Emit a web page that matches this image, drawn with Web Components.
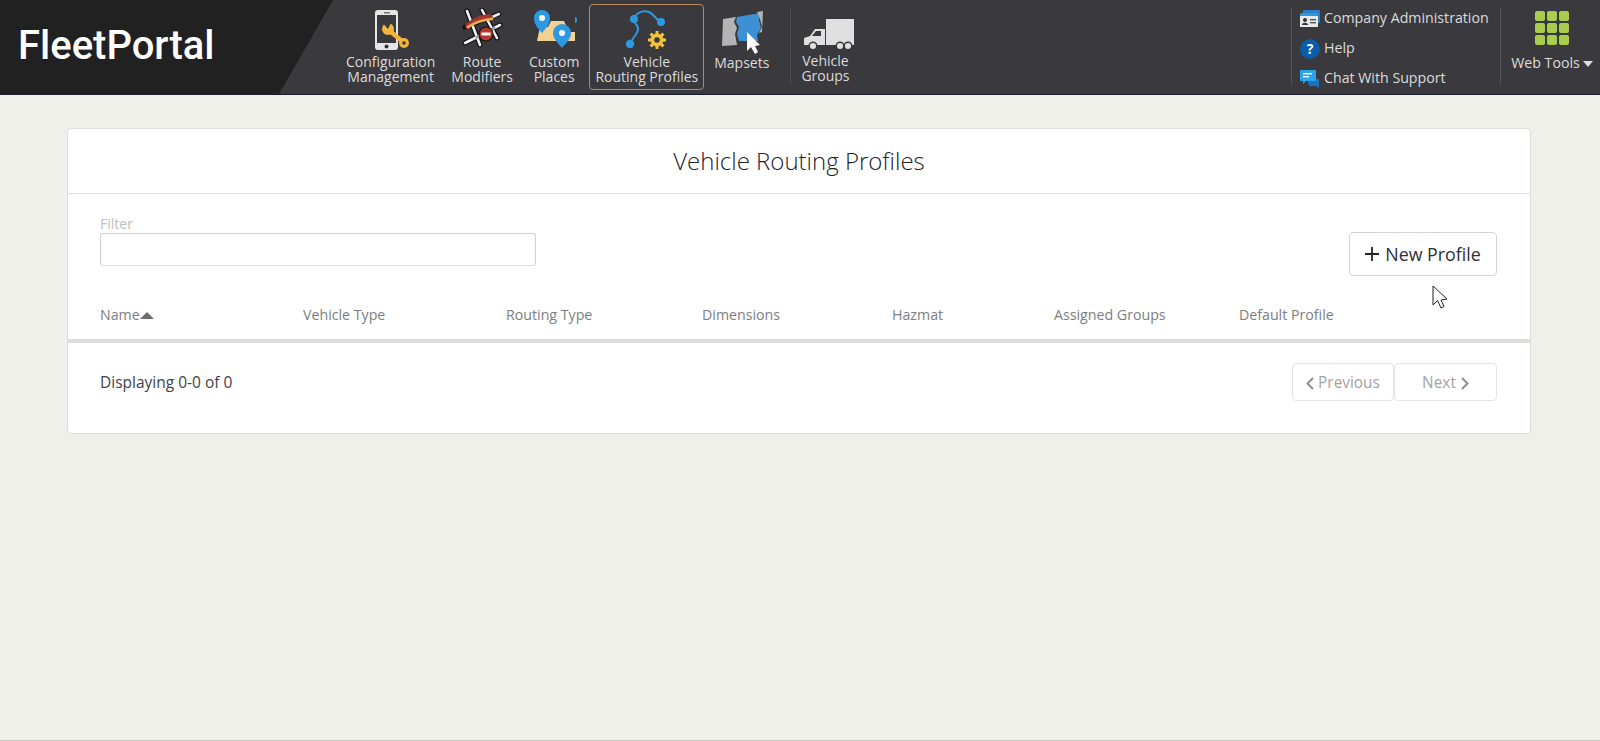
<!DOCTYPE html>
<html>
<head>
<meta charset="utf-8">
<title>FleetPortal</title>
<style>
    html,body{margin:0;padding:0;height:100%;}
    body{background:#f0f0ea;font-family:"Open Sans",sans-serif;overflow:hidden;box-sizing:border-box;border-bottom:1px solid #c6c6c0;}
</style>
</head>
<body>
<fp-header>
    <fp-nav-item slot="nav" label="Configuration<br>Management">
        <svg width="46" height="46" viewBox="0 0 46 46">
            <rect x="7" y="2" width="23" height="40" rx="3" fill="#e6e6e6"/>
            <rect x="9" y="7" width="19" height="28" fill="#39393e"/>
            <rect x="16" y="4" width="6" height="1.5" fill="#777"/>
            <circle cx="18.5" cy="38.5" r="2" fill="#333"/>
            <path d="M23 24 L34 33" fill="none" stroke="#f2b53c" stroke-width="4.5"/>
            <circle cx="20" cy="21" r="6" fill="#f2b53c"/>
            <path d="M13 13 L20 21 L24 13 Z" fill="#39393e"/>
            <circle cx="36" cy="35" r="5" fill="#f2b53c"/>
            <circle cx="36" cy="35" r="1.8" fill="#39393e"/>
        </svg>
    </fp-nav-item>
    <fp-nav-item slot="nav" label="Route<br>Modifiers">
        <svg width="46" height="46" viewBox="0 0 46 46">
            <g fill="none" stroke-linecap="round">
                <g stroke="#111" stroke-width="5">
                    <path d="M8 3 L21 37"/><path d="M23 2 L38 30"/><path d="M6 19 L40 6"/><path d="M6 35 L41 17"/>
                </g>
                <g stroke="#f2f2f2" stroke-width="2.6">
                    <path d="M8 3 L21 37"/><path d="M23 2 L38 30"/><path d="M31 10 L40 6"/><path d="M6 35 L18 29"/><path d="M35 20 L41 17"/>
                </g>
                <path d="M18 29 L35 20" stroke="#9a9a9a" stroke-width="3"/>
                <path d="M9 18 C15 12 24 9 31 9" stroke="#a8352a" stroke-width="5.5"/>
                <path d="M9 19 C15 15 24 12 33 11" stroke="#e8b050" stroke-width="2.4"/>
            </g>
            <circle cx="27" cy="26" r="7.5" fill="#111"/>
            <circle cx="27" cy="26" r="6.5" fill="#b5362a"/>
            <rect x="22.5" y="24.5" width="9" height="3" fill="#f4f4f4"/>
        </svg>
    </fp-nav-item>
    <fp-nav-item slot="nav" label="Custom<br>Places">
        <svg width="46" height="46" viewBox="0 0 46 46">
            <path d="M6 33 L9 19 L17 19 L20 13 L33 13 L38 24 L44 24 L44 33 Z" fill="#f3d193"/>
            <path d="M11 25 C6 19 3 16 3 10 a8 8 0 0 1 16 0 C19 16 16 19 11 25 Z" fill="#2b9ae2"/>
            <circle cx="11" cy="10" r="3" fill="#fff"/>
            <path d="M31 40 C25 33 22 30 22 25 a9 9 0 0 1 18 0 C40 30 37 33 31 40 Z" fill="#2b9ae2"/>
            <circle cx="31" cy="25" r="3" fill="#fff"/>
            <path d="M44 9 a2 3 0 0 1 0 6 Z" fill="#2b9ae2"/>
        </svg>
    </fp-nav-item>
    <fp-nav-item slot="nav" active label="Vehicle<br>Routing Profiles">
        <svg width="46" height="46" viewBox="0 0 46 46">
            <path d="M6 36 C8 30 13 27 14 22 C15 17 9 15 10 11 C12 4 20 2 25 4 C30 6 32 12 37 14" fill="none" stroke="#2b9ae2" stroke-width="2"/>
            <circle cx="10" cy="11" r="4" fill="#2b9ae2"/>
            <circle cx="37" cy="14" r="4" fill="#2b9ae2"/>
            <circle cx="6" cy="36" r="4.2" fill="#2b9ae2"/>
            <g fill="#f5c33b">
                <circle cx="33" cy="32" r="6.5"/>
                <g stroke="#f5c33b" stroke-width="3">
                    <path d="M33 23 V41"/><path d="M24 32 H42"/><path d="M26.6 25.6 L39.4 38.4"/><path d="M39.4 25.6 L26.6 38.4"/>
                </g>
            </g>
            <circle cx="33" cy="32" r="2.8" fill="#39393e"/>
        </svg>
    </fp-nav-item>
    <fp-nav-item slot="nav" single label="Mapsets">
        <svg width="46" height="46" viewBox="0 0 46 46">
            <path d="M4 11 L17 9 L15 14 L18 20 L16 26 L18 37 L3 38 Z" fill="#b4b4b4"/>
            <path d="M18 9 L41 5 L40 12 L42 20 L38 27 L39 33 L20 33 L18 26 L20 19 L17 14 Z" fill="#3d90d3"/>
            <path d="M38 4 L44 3 L43 24 L40 25 L43 19 L41 11 Z" fill="#b4b4b4"/>
            <path d="M28 24 L28 43 L32 39 L36 46 L39 44 L36 38 L41 37 Z" fill="#fff"/>
        </svg>
    </fp-nav-item>
    <fp-nav-item slot="nav" label="Vehicle<br>Groups" divided>
        <svg width="46" height="46" viewBox="0 0 46 46" style="overflow:visible">
            <g transform="translate(0 1)">
                <rect x="24" y="11" width="28" height="26" fill="#e0e0e0"/>
                <path d="M2 36 L2 30 L8 28 L13 21 L23 21 L23 37 L2 37 Z" fill="#e0e0e0"/>
                <path d="M10 28 L14 23 L19 23 L19 28 Z" fill="#39393e"/>
                <g fill="#e0e0e0" stroke="#39393e" stroke-width="1.5">
                    <circle cx="11" cy="38" r="3.8"/><circle cx="38" cy="38" r="3.8"/><circle cx="46" cy="38" r="3.8"/>
                </g>
            </g>
        </svg>
    </fp-nav-item>

    <fp-side-link slot="links" label="Company Administration">
        <svg width="20" height="18" viewBox="0 0 20 18">
            <rect x="3" y="0" width="17" height="13" rx="1" fill="#2b7fc4"/>
            <rect x="0" y="3" width="18" height="14" rx="1" fill="#2b9ae2"/>
            <rect x="0" y="6" width="18" height="11" fill="#e8e8e8"/>
            <circle cx="5" cy="10" r="2" fill="#333"/>
            <path d="M2 15 C2 12 8 12 8 15 Z" fill="#333"/>
            <rect x="10" y="9" width="6" height="1.4" fill="#555"/>
            <rect x="10" y="12" width="6" height="1.4" fill="#555"/>
        </svg>
    </fp-side-link>
    <fp-side-link slot="links" label="Help">
        <fp-help-badge></fp-help-badge>
    </fp-side-link>
    <fp-side-link slot="links" label="Chat With Support">
        <svg width="20" height="18" viewBox="0 0 20 18">
            <path d="M7 9 H19 V16 L19 18 L16 16 H9 Z" fill="#1a74bd"/>
            <path d="M1 0 H15 Q16 0 16 1 V10 Q16 11 15 11 H6 L3 14 V11 H1 Q0 11 0 10 V1 Q0 0 1 0 Z" fill="#2ba4ea"/>
            <rect x="3" y="3" width="9" height="1.4" fill="#fff"/>
            <rect x="3" y="6" width="6" height="1.4" fill="#fff"/>
        </svg>
    </fp-side-link>
</fp-header>

<fp-profiles-card title-text="Vehicle Routing Profiles"></fp-profiles-card>
<fp-pointer></fp-pointer>

<script>
const fp_header = document.createElement('template');
fp_header.innerHTML = `
    <style>
        :host{display:flex;height:94px;background:#39393e;border-bottom:1px solid #1b1e2a;color:#dcdcdc;font-family:"Open Sans",sans-serif;position:relative;}
        .logo{width:333px;height:94px;background:#212121;clip-path:polygon(0 0,100% 0,279px 100%,0 100%);display:flex;align-items:center;box-sizing:border-box;padding:0 0 3px 18px;flex:none;
            font-family:Roboto,sans-serif;font-weight:500;font-size:40px;color:#fff;letter-spacing:0;}
        .nav{display:flex;gap:4px;margin-left:7px;align-items:flex-start;padding-top:4px;}
        .right{margin-left:auto;display:flex;}
        .links{width:209px;box-sizing:border-box;margin-top:8px;height:76px;border-left:1px solid #55565a;display:flex;flex-direction:column;padding-left:8px;}
        .links-in{margin-top:-6px;display:flex;flex-direction:column;}
        .tools{width:100px;box-sizing:border-box;margin-top:8px;height:76px;border-left:1px solid #55565a;display:flex;flex-direction:column;align-items:center;padding-top:3px;}
        .grid{display:grid;grid-template-columns:repeat(3,10px);grid-auto-rows:10px;gap:2px;margin-left:3px;}
        .grid i{background:#a8cc4c;border-radius:2px;}
        .label{font-size:14.2px;line-height:19px;margin-top:8px;white-space:nowrap;display:flex;align-items:center;margin-left:3px;}
        .caret{width:0;height:0;border:5.5px solid transparent;border-top:6px solid #dcdcdc;border-bottom:0;margin-left:3px;margin-top:2px;}
    </style>
    <div class="logo">FleetPortal</div>
    <div class="nav"><slot name="nav"></slot></div>
    <div class="right">
        <div class="links"><div class="links-in"><slot name="links"></slot></div></div>
        <div class="tools">
            <div class="grid"><i></i><i></i><i></i><i></i><i></i><i></i><i></i><i></i><i></i></div>
            <div class="label">Web Tools<span class="caret"></span></div>
        </div>
    </div>
`;
class FpHeader extends HTMLElement {
    constructor() {
        super();
        this.attachShadow({ mode: 'open' });
        this.shadowRoot.appendChild(fp_header.content.cloneNode(true));
    }
}
customElements.define('fp-header', FpHeader);

const fp_nav_item = document.createElement('template');
fp_nav_item.innerHTML = `
    <style>
        :host{display:flex;align-items:flex-start;}
        .box{box-sizing:border-box;height:86px;padding:3px 5px 0;border:1px solid transparent;border-radius:4px;display:flex;flex-direction:column;align-items:center;}
        :host([active]) .box{border-color:#b98a5a;}
        .icon{height:46px;width:46px;display:block;}
        .text{font-size:14px;line-height:15px;text-align:center;white-space:nowrap;color:#dcdcdc;}
        :host([single]) .text{margin-top:1px;}
        :host([divided]){margin-left:11px;border-left:1px solid #4f5055;height:76px;margin-top:4px;padding-left:4px;}
        :host([divided]) .box{margin-top:-5px;}
    </style>
    <div class="box">
        <div class="icon"><slot></slot></div>
        <div class="text"></div>
    </div>
`;
class FpNavItem extends HTMLElement {
    constructor() {
        super();
        this.attachShadow({ mode: 'open' });
        this.shadowRoot.appendChild(fp_nav_item.content.cloneNode(true));
    }
    connectedCallback() {
        this.shadowRoot.querySelector('.text').innerHTML = this.getAttribute('label');
    }
}
customElements.define('fp-nav-item', FpNavItem);

const fp_side_link = document.createElement('template');
fp_side_link.innerHTML = `
    <style>
        :host{display:flex;align-items:center;height:30px;font-size:14.2px;color:#dcdcdc;white-space:nowrap;}
        .icon{width:20px;height:20px;display:flex;align-items:center;justify-content:center;margin-right:4px;margin-top:3px;}
    </style>
    <span class="icon"><slot></slot></span><span class="text"></span>
`;
class FpSideLink extends HTMLElement {
    constructor() {
        super();
        this.attachShadow({ mode: 'open' });
        this.shadowRoot.appendChild(fp_side_link.content.cloneNode(true));
    }
    connectedCallback() {
        this.shadowRoot.querySelector('.text').textContent = this.getAttribute('label');
    }
}
customElements.define('fp-side-link', FpSideLink);

class FpHelpBadge extends HTMLElement {
    constructor() {
        super();
        this.attachShadow({ mode: 'open' }).innerHTML = `
            <style>
                :host{display:flex;width:20px;height:20px;border-radius:50%;background:#0d5ca8;color:#fff;font:bold 14px/20px "Open Sans",sans-serif;align-items:center;justify-content:center;}
            </style>?`;
    }
}
customElements.define('fp-help-badge', FpHelpBadge);

class FpButton extends HTMLElement {
    constructor() {
        super();
        this.attachShadow({ mode: 'open' }).innerHTML = `
            <style>
                :host{display:inline-flex;align-items:center;justify-content:center;box-sizing:border-box;border:1px solid #d4d4d0;border-radius:4px;background:#fff;color:#2d3038;font-size:17.8px;height:44px;width:148px;white-space:nowrap;}
                :host([pager]){width:103px;height:38px;font-size:15.4px;color:#a3a3a3;border-color:#e4e4e0;}
            </style>
            <slot></slot>`;
    }
}
customElements.define('fp-button', FpButton);

const fp_card = document.createElement('template');
fp_card.innerHTML = `
    <style>
        :host{display:block;box-sizing:border-box;margin:33px 69px 0 67px;background:#fff;border:1px solid #dcdcd8;border-radius:4px;color:#3f4148;font-family:"Open Sans",sans-serif;height:306px;}
        h1{margin:0;font-weight:300;font-size:24px;line-height:63px;height:64px;text-align:center;color:#1f2128;border-bottom:1px solid #dcdedb;}
        .toolbar{display:flex;justify-content:space-between;align-items:flex-end;padding:21px 33px 0 32px;height:61px;}
        .filter{margin-bottom:10px;}
        .filter label{display:block;font-size:14px;line-height:18px;color:#bdbdbd;}
        .filter .input{width:436px;height:33px;box-sizing:border-box;border:1px solid #cfcfcf;border-bottom-color:#dedede;border-radius:3px;}
        .head{display:grid;grid-template-columns:203px 203px 196px 190px 162px 185px 1fr;padding:29px 0 14px 32px;height:20px;font-size:14.2px;line-height:20px;color:#7c7e80;border-bottom:4px solid #dcdedb;}
        .name{display:flex;align-items:center;}
        .name i{width:0;height:0;border:7px solid transparent;border-bottom:7px solid #6d6d6d;border-top:0;}
        .foot{display:flex;justify-content:space-between;align-items:center;padding:20px 33px 0 32px;font-size:15.5px;}
        .pages{display:flex;}
        svg{margin:3px 4px 0 0;}
        svg.after{margin:3px 0 0 5px;}
        svg.plus{margin:0 6px 0 0;}
    </style>
    <h1></h1>
    <div class="toolbar">
        <div class="filter">
            <label>Filter</label>
            <div class="input"></div>
        </div>
        <fp-button>
            <svg class="plus" width="14" height="14" viewBox="0 0 14 14"><path d="M7 0 V14 M0 7 H14" stroke="#23252b" stroke-width="1.8"/></svg>New Profile
        </fp-button>
    </div>
    <div class="head">
        <div class="name">Name<i></i></div>
        <div>Vehicle Type</div>
        <div>Routing Type</div>
        <div>Dimensions</div>
        <div>Hazmat</div>
        <div>Assigned Groups</div>
        <div>Default Profile</div>
    </div>
    <div class="foot">
        <div>Displaying 0-0 of 0</div>
        <div class="pages">
            <fp-button pager style="width:102px"><svg width="8" height="13" viewBox="0 0 8 13"><path d="M7 1 L1.5 6.5 L7 12" fill="none" stroke="#8f8f8f" stroke-width="2"/></svg>Previous</fp-button>
            <fp-button pager>Next<svg class="after" width="8" height="13" viewBox="0 0 8 13"><path d="M1 1 L6.5 6.5 L1 12" fill="none" stroke="#8f8f8f" stroke-width="2"/></svg></fp-button>
        </div>
    </div>
`;
class FpProfilesCard extends HTMLElement {
    constructor() {
        super();
        this.attachShadow({ mode: 'open' });
        this.shadowRoot.appendChild(fp_card.content.cloneNode(true));
    }
    connectedCallback() {
        this.shadowRoot.querySelector('h1').textContent = this.getAttribute('title-text');
    }
}
customElements.define('fp-profiles-card', FpProfilesCard);

// the mouse pointer caught in the screenshot, it lies over the card
class FpPointer extends HTMLElement {
    constructor() {
        super();
        this.attachShadow({ mode: 'open' }).innerHTML = `
            <style>:host{position:absolute;left:1432px;top:285px;width:16px;height:24px;display:block;}</style>
            <svg width="16" height="24" viewBox="0 0 16 24"><path d="M1 1 L1 20 L5.5 15.5 L9 23 L12 21.5 L9 15 L15 14 Z" fill="#fff" stroke="#222" stroke-width="1"/></svg>`;
    }
}
customElements.define('fp-pointer', FpPointer);
</script>
</body>
</html>
